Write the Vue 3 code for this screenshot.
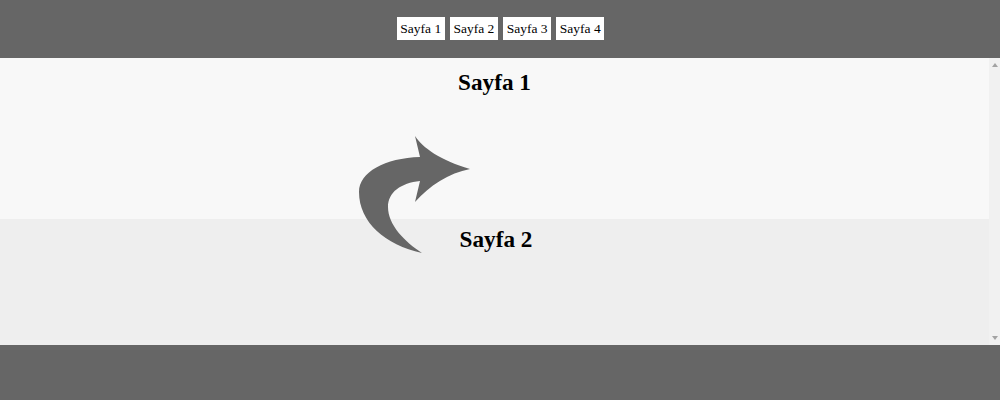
<template>
  <div class="page">
    <header class="top">
      <nav class="menu">
        <a v-for="item in pages" :key="item" class="link">{{ item }}</a>
      </nav>
    </header>
    <div class="scroller">
      <div class="sections">
        <section class="one"><h2>Sayfa 1</h2></section>
        <section class="two"><h2>Sayfa 2</h2></section>
      </div>
      <div class="bar">
        <span class="up"></span>
        <span class="down"></span>
      </div>
    </div>
    <footer class="bottom"></footer>
    <svg class="arrow" width="120" height="130" viewBox="0 0 120 130">
      <path d="M60 6 C 68 18 85 30 115 39 C 94 43 74 56 60 72 L 65 51 C 46 53 33 62 33 77 C 33 95 50 112 67 123 C 30 115 4 92 4 62 C 4 42 30 28 65 27 Z" fill="#666666"/>
    </svg>
  </div>
</template>

<script setup>
const pages = ['Sayfa 1', 'Sayfa 2', 'Sayfa 3', 'Sayfa 4'];
</script>

<style>
html, body {
  overflow: hidden;
}
</style>

<style scoped>
.page {
  position: relative;
  display: flex;
  flex-direction: column;
  width: 1000px;
  height: 400px;
  font-family: "Liberation Serif", "Times New Roman", serif;
  color: #000;
}

.top {
  display: flex;
  justify-content: center;
  align-items: flex-start;
  height: 58px;
  padding-top: 17px;
  padding-left: 1px;
  box-sizing: border-box;
  background: #666;
}

.menu {
  display: flex;
  gap: 5.5px;
}

.link {
  display: block;
  height: 23px;
  padding: 0 3.4px;
  line-height: 23px;
  font-size: 13.5px;
  background: #fff;
}

.scroller {
  display: flex;
  height: 287px;
}

.sections {
  flex: 1;
  display: flex;
  flex-direction: column;
}

.one {
  height: 161px;
  background: #f8f8f8;
}

.two {
  flex: 1;
  background: #eee;
}

h2 {
  margin: 0;
  padding-top: 10px;
  text-align: center;
  font-size: 23.2px;
  line-height: 28px;
  font-weight: bold;
}

.two h2 {
  padding-top: 6px;
  padding-left: 3px;
}

.bar {
  position: relative;
  width: 11px;
  background: #f1f1f1;
}

.up, .down {
  position: absolute;
  left: 3px;
  width: 0;
  height: 0;
  border-left: 3px solid transparent;
  border-right: 3px solid transparent;
}

.up {
  top: 5px;
  border-bottom: 4px solid #a3a3a3;
}

.down {
  bottom: 5px;
  border-top: 4px solid #a3a3a3;
}

.bottom {
  flex: 1;
  background: #666;
}

.arrow {
  position: absolute;
  left: 355px;
  top: 130px;
}
</style>
